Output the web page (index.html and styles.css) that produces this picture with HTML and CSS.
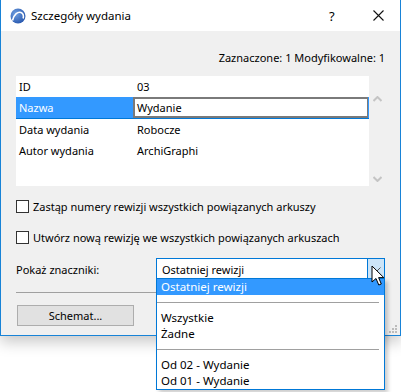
FILE: index.html
```html
<!DOCTYPE html>
<html>
<head>
<meta charset="utf-8">
<link rel="stylesheet" href="styles.css">
</head>
<body>
<div class="dialog">
  <div class="titlebar">
    <svg class="appicon" width="16" height="16" viewBox="0 0 16 16">
      <defs>
        <radialGradient id="g" cx="0.35" cy="0.35" r="0.8">
          <stop offset="0" stop-color="#6f9fe0"/>
          <stop offset="1" stop-color="#1f4fa8"/>
        </radialGradient>
      </defs>
      <circle cx="8" cy="8" r="7.5" fill="url(#g)"/>
      <path d="M2.5 12.5 C4 6 8 3.5 11 4.5 C13 5.2 13.8 7.5 13.2 10.5" fill="none" stroke="#fff" stroke-width="1.6"/>
    </svg>
    <span class="title">Szczegóły wydania</span>
    <span class="tb-help">?</span>
    <svg class="tb-close" width="11" height="11" viewBox="0 0 11 11"><path d="M0.5 0.5 L10.5 10.5 M10.5 0.5 L0.5 10.5" stroke="#111" stroke-width="1.1"/></svg>
  </div>
  <div class="body">
    <div class="counts">Zaznaczone: 1 Modyfikowalne: 1</div>
    <div class="listwrap">
      <div class="list">
        <div class="row"><span class="k">ID</span><span class="v">03</span></div>
        <div class="row sel"><span class="k">Nazwa</span><span class="v edit">Wydanie</span></div>
        <div class="row"><span class="k">Data wydania</span><span class="v">Robocze</span></div>
        <div class="row"><span class="k">Autor wydania</span><span class="v">ArchiGraphi</span></div>
      </div>
      <div class="scroll">
        <svg width="9" height="6" viewBox="0 0 9 6"><path d="M0.5 5 L4.5 1 L8.5 5" fill="none" stroke="#c4c4c4" stroke-width="2"/></svg>
        <svg width="9" height="6" viewBox="0 0 9 6"><path d="M0.5 1 L4.5 5 L8.5 1" fill="none" stroke="#c4c4c4" stroke-width="2"/></svg>
      </div>
    </div>
    <label class="check c1"><span class="box"></span>Zastąp numery rewizji wszystkich powiązanych arkuszy</label>
    <label class="check c2"><span class="box"></span>Utwórz nową rewizję we wszystkich powiązanych arkuszach</label>
    <div class="showrow">
      <span class="lbl">Pokaż znaczniki:</span>
      <div class="combo">
        <span class="combo-text">Ostatniej rewizji</span>
        <span class="combo-btn"><svg width="9" height="5" viewBox="0 0 9 5"><path d="M0.5 0.5 L4.5 4.5 L8.5 0.5" fill="none" stroke="#555" stroke-width="1"/></svg></span>
        <div class="droplist">
          <div class="item hl">Ostatniej rewizji</div>
          <div class="sep"></div>
          <div class="item">Wszystkie</div>
          <div class="item">Żadne</div>
          <div class="sep"></div>
          <div class="item">Od 02 - Wydanie</div>
          <div class="item">Od 01 - Wydanie</div>
        </div>
        <svg class="cursor" width="14" height="22" viewBox="0 0 14 22"><path d="M1 1 L1 17 L5 13.5 L7.8 20 L10.3 19 L7.6 12.6 L12.8 12.6 Z" fill="#fff" stroke="#000" stroke-width="1" stroke-linejoin="miter"/></svg>
      </div>
    </div>
    <div class="hr"></div>
    <div class="btnrow"><span class="btn">Schemat...</span></div>
    <svg class="grip" width="9" height="9" viewBox="0 0 9 9"><g fill="#bcbcbc"><rect x="7" y="1" width="2" height="2"/><rect x="4" y="4" width="2" height="2"/><rect x="7" y="4" width="2" height="2"/><rect x="1" y="7" width="2" height="2"/><rect x="4" y="7" width="2" height="2"/><rect x="7" y="7" width="2" height="2"/></g></svg>
  </div>
</div>
</body>
</html>
```
FILE: styles.css
```css
html, body { margin: 0; padding: 0; background: #fff; }
body { font-family: "Noto Sans", "Open Sans", sans-serif; font-size: 11px; color: #000; width: 401px; height: 392px; overflow: hidden; }
.dialog { width: 399px; border: 1px solid #1883d7; border-top: none; box-shadow: 0 6px 14px rgba(0,0,0,0.22); background: #f0f0f0; position: relative; }
.titlebar { height: 31px; background: #fff; display: flex; align-items: center; position: relative; }
.appicon { margin-left: 9px; margin-right: 5px; }
.title { font-size: 11.5px; }
.tb-help { position: absolute; left: 328px; top: 7px; font-size: 13px; }
.tb-close { position: absolute; left: 372px; top: 10px; }
.body { height: 304px; padding: 0 15px; position: relative; }
.counts { text-align: right; padding-top: 19px; height: 26px; line-height: 16px; padding-right: 0; }
.listwrap { display: flex; height: 110px; margin-top: 0; }
.list { width: 353px; background: #fff; padding-top: 0; }
.row { height: 21px; display: flex; align-items: center; }
.row .k { width: 115px; padding-left: 3px; }
.row .v { padding-left: 3px; }
.row.sel { background: #3399ff; border-bottom: 1px solid #0078d7; height: 21px; }
.row.sel .k { color: #fff; }
.row.sel .v.edit { flex: 1; background: #fff; border: 2px solid #7a7a7a; border-right-width: 1px; height: 17px; line-height: 17px; padding-left: 2px; margin-left: -1px; margin-right: 1px; }
.scroll { flex: 1; display: flex; flex-direction: column; justify-content: space-between; align-items: center; padding: 20px 0 4px 0; }
.check { display: flex; align-items: center; height: 14px; }
.check.c1 { margin-top: 13px; }
.check.c2 { margin-top: 17px; }
.box { width: 11px; height: 11px; border: 1px solid #333; background: #fff; margin-right: 4px; }
.showrow { display: flex; align-items: center; margin-top: 14px; height: 22px; }
.lbl { width: 140px; }
.combo { position: relative; width: 227px; height: 20px; border: 1px solid #0078d7; background: #fff; display: flex; align-items: center; }
.combo-text { flex: 1; padding-left: 5px; }
.combo-btn { width: 16px; height: 20px; background: #cce4f7; border-left: 1px solid #0078d7; display: flex; align-items: center; justify-content: center; }
.droplist { position: absolute; left: -1px; top: 19px; width: 227px; border: 1px solid #0078d7; background: #fff; box-shadow: 3px 3px 4px rgba(0,0,0,0.2); z-index: 5; font-size: 11.5px; }
.item { height: 16px; line-height: 16px; padding-left: 4px; }
.item.hl { background: #3399ff; color: #fff; }
.sep { height: 1px; background: #a0a0a0; margin: 7px 5px 7px 0; }
.cursor { position: absolute; left: 214px; top: 6px; z-index: 6; }
.hr { height: 1px; background: #a0a0a0; width: 140px; margin-top: 12px; }
.btnrow { margin-top: 12px; }
.btn { display: inline-block; width: 115px; height: 19px; line-height: 19px; text-align: center; background: #e1e1e1; border: 1px solid #adadad; margin-left: 1px; }
.grip { position: absolute; right: 3px; bottom: 2px; }
```
